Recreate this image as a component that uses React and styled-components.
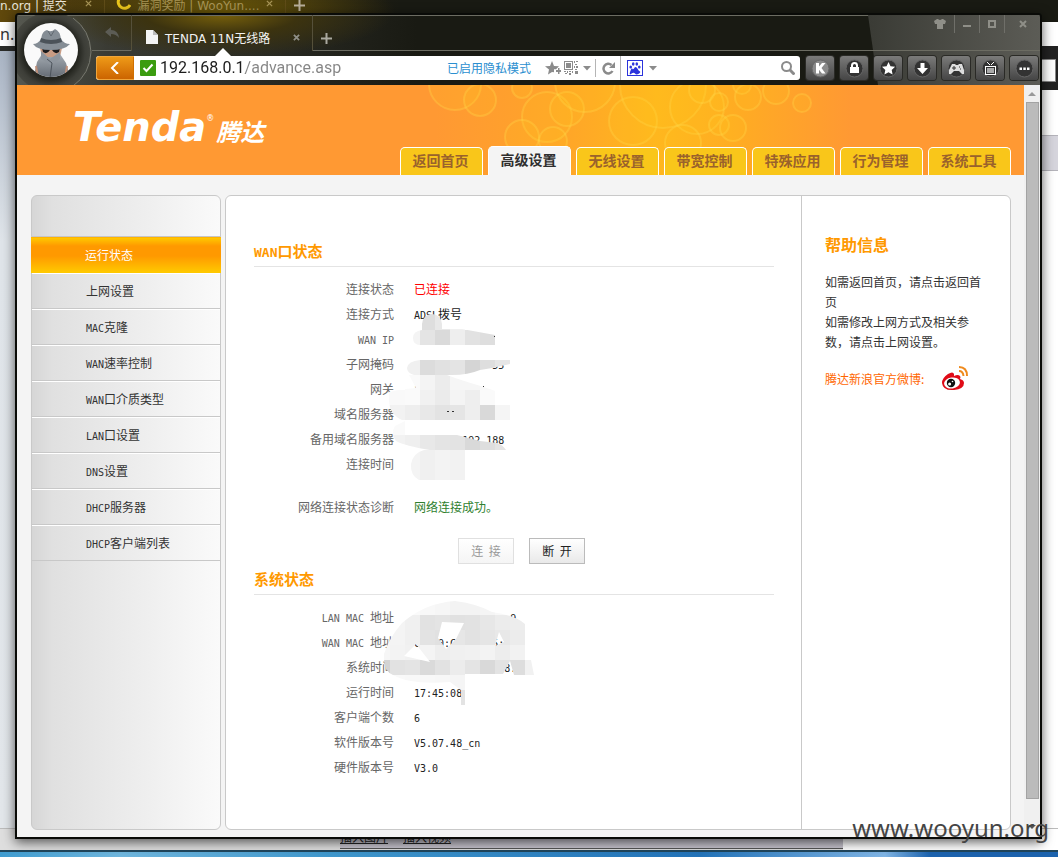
import React from "react";
import styled, { createGlobalStyle, css } from "styled-components";

const song = '"Noto Sans CJK SC", "Noto Sans", sans-serif';
const ui = '"DejaVu Sans", "Noto Sans CJK SC", sans-serif';

const GlobalStyle = createGlobalStyle`
  *, *::before, *::after { box-sizing: border-box; }
  body { margin: 0; font-family: ${song}; font-size: 12px; color: #333; }
  a { color: inherit; text-decoration: none; }
  button, input { font: inherit; padding: 0; margin: 0; border: 0; }
  h2, ul, p { margin: 0; padding: 0; }
  ul { list-style: none; }
  svg { display: block; }
`;

/* ---------- desktop and the window behind ---------- */

const Desktop = styled.div`
  position: relative;
  min-height: 100vh;
  display: flex;
  flex-direction: column;
  overflow: hidden;
  background: #fff;
`;

const BackTabs = styled.div`
  height: 22px;
  display: flex;
  align-items: flex-start;
  background: radial-gradient(ellipse 170px 60px at 225px 14px, #6b5708, transparent),
    linear-gradient(90deg, #60480c 0, #3c300e 110px, #191a13 400px);
  color: #b9b09c;
  font: 12px/12px ${ui};
  white-space: nowrap;
`;

const BackTab = styled.div`
  width: ${(p) => p.$width}px;
  height: 14px;
  display: flex;
  justify-content: space-between;
  gap: 4px;
  padding-right: 12px;
  border-right: 1px solid #5f4c18;
  color: ${(p) => (p.$bright ? "#e9e4d8" : "#a79456")};
`;

const TabCross = styled.span`
  color: #a79456;
`;

const BackPlus = styled.div`
  padding-left: 8px;
`;

const BackAddress = styled.div`
  height: 24px;
  background: #fff;
  font: 16px/24px "Noto Sans", sans-serif;
`;

const BackBody = styled.div`
  flex: 1;
  display: flex;
  justify-content: space-between;
`;

const BackLeft = styled.div`
  width: 50%;
  border-top: 5px solid #2b2c2a;
  background: linear-gradient(180deg, #a9b4c4 0, #dfe4e9 190px, #e2e6ea);
`;

const BackRight = styled.div`
  width: 50%;
  display: flex;
  flex-direction: column;
  background: #fff;
`;

const BackSearch = styled.div`
  height: 44px;
  padding: 13px 2px 8px;
  background: #222;
  &::after {
    content: "";
    display: block;
    height: 23px;
    background: #fff;
    border: 1px solid #888;
  }
`;

const BackBand = styled.div`
  height: 36px;
  margin-top: 45px;
  background: #d5d4dc;
  border: solid #b4b3ba;
  border-width: 1px 0;
`;

const BackFooter = styled.div`
  height: 22px;
  display: flex;
  background: #dedede;
  border-top: 1px solid #bbb;
`;

const BackLinks = styled.div`
  flex: 0 0 503px;
  margin-left: 340px;
  height: 20px;
  display: flex;
  gap: 15px;
  background: #c6c3cd;
  border-bottom: 1px solid #555;
  font: 12px/15px ${song};
  color: #222;
  text-decoration: underline;
`;

const BackBlank = styled.div`
  flex: 1;
  background: #fff;
`;

const Taskbar = styled.div`
  height: 7px;
  border-top: 2px solid #20465c;
  background: linear-gradient(90deg, #3f9cd0 0, #6fb6dd 120px, #3f97cc 330px, #2373b8 700px, #7fb4e4 885px, #1c63ae 930px);
`;

const Watermark = styled.div`
  position: absolute;
  right: 9px;
  bottom: 13px;
  font: 24px/32px "Noto Sans", sans-serif;
  color: #454545;
`;

/* ---------- browser window ---------- */

const Frame = styled.section`
  position: absolute;
  inset: 13px 16px 18px 15px;
  display: flex;
  flex-direction: column;
  border: 2px solid #0a0b08;
  border-radius: 4px 4px 0 0;
  background: #191a13;
  box-shadow: 0 3px 12px rgba(0, 0, 0, 0.65);
  overflow: hidden;
`;

const Chrome = styled.header`
  position: relative;
  height: 70px;
  display: flex;
  background: radial-gradient(ellipse 170px 42px at 205px 0, #77600b 0, #3c330f 45%, transparent),
    linear-gradient(90deg, #55574f 0, #3a3b34 90px, #191a13 400px);
  box-shadow: inset 0 1px #6c6c62;
  font-family: ${ui};
  &::after {
    content: "";
    position: absolute;
    inset: 0 0 0 auto;
    width: 172px;
    background: linear-gradient(90deg, #3a3b35, #5c5c56);
    clip-path: polygon(0 0, 100% 0, 100% 100%, 10px 100%);
  }
`;

const AvatarSlot = styled.div`
  flex: 0 0 75px;
  overflow: hidden;
`;

const ChromeMain = styled.div`
  flex: 1;
  min-width: 0;
  position: relative;
  z-index: 1;
`;

const TabStrip = styled.div`
  height: 36px;
  display: flex;
`;

const IconButton = styled.button`
  flex: none;
  width: ${(p) => p.$width || 24}px;
  height: ${(p) => (p.$height ? p.$height + "px" : "100%")};
  display: flex;
  align-items: center;
  justify-content: center;
  background: none;
  color: ${(p) => p.$color || "#8f8f88"};
  ${(p) => p.$divided && css`border-left: 1px solid #6f6f69;`}
  ${(p) => p.$lined && css`border-bottom: 1px solid #6c6c62;`}
`;

const ActiveTab = styled.div`
  position: relative;
  flex: 0 0 182px;
  display: flex;
  align-items: center;
  padding: 8px 8px 0 14px;
  gap: 7px;
  border: solid #55503a;
  border-width: 0 1px;
  color: #f2f2f2;
  font-size: 12px;
  white-space: nowrap;
  &::after {
    content: "";
    position: absolute;
    left: 83px;
    bottom: -5px;
    border: 8px solid transparent;
    border-top: 0;
    border-bottom-color: #fff;
  }
`;

const TabTitle = styled.span`
  flex: 1;
`;

const StripRest = styled.div`
  flex: 1;
  display: flex;
  justify-content: space-between;
  border-bottom: 1px solid #6c6c62;
`;

const WindowButtons = styled.div`
  display: flex;
  height: 18px;
`;

const Toolbar = styled.div`
  display: flex;
  height: 34px;
  padding: 5px 2px 5px 4px;
  gap: 6px;
`;

const AddressBar = styled.form`
  flex: 1;
  min-width: 0;
  display: flex;
  align-items: center;
  height: 24px;
  background: #fff;
  border-radius: 3px;
  overflow: hidden;
`;

const BackButton = styled.button`
  flex: 0 0 38px;
  height: 24px;
  display: flex;
  align-items: center;
  justify-content: center;
  background: linear-gradient(#ee9a18, #cc6400);
  border: 1px solid #f0a53a;
  border-right-color: #d07000;
  border-radius: 3px 0 0 3px;
`;

const Secure = styled.span`
  flex: none;
  margin: 0 4px 0 6px;
`;

const UrlInput = styled.input`
  flex: 1;
  min-width: 0;
  height: 24px;
  outline: 0;
  font: 16px/24px Roboto, sans-serif;
  color: transparent;
  background: linear-gradient(90deg, #1c1c1c 85px, #858585 85px);
  -webkit-background-clip: text;
  background-clip: text;
`;

const PrivateMode = styled.span`
  flex: none;
  margin-right: 12px;
  color: #2b8fd0;
  font: 12px/24px ${song};
`;

const Divider = styled.span`
  width: 1px;
  height: ${(p) => p.$height}px;
  background: #b5b5b5;
`;

const SearchInput = styled.input`
  flex: 0 0 119px;
  min-width: 0;
  height: 24px;
  outline: 0;
  background: none;
`;

const ToolButtons = styled.div`
  display: flex;
  gap: 6px;
`;

const ToolButton = styled.button`
  width: 28px;
  height: 24px;
  display: flex;
  align-items: center;
  justify-content: center;
  border-radius: 3px;
  background: linear-gradient(#7b7b7a, #454545);
  box-shadow: 0 0 0 1px #2a2a26;
`;

/* ---------- router page ---------- */

const View = styled.div`
  flex: 1;
  min-height: 0;
  display: flex;
  background: #f4f4f4;
`;

const Page = styled.div`
  flex: 1;
  min-width: 0;
  display: flex;
  flex-direction: column;
`;

const Banner = styled.div`
  position: relative;
  height: 90px;
  flex: none;
  display: flex;
  justify-content: space-between;
  background: #f93;
`;

const Bubbles = styled.svg`
  position: absolute;
  right: 174px;
  top: 0;
`;

const Logo = styled.div`
  position: relative;
  display: flex;
  align-items: baseline;
  height: 60px;
  padding: 18px 0 0 56px;
  color: #fff;
  font: italic bold 40px/48px "DejaVu Sans", sans-serif;
`;

const Reg = styled.sup`
  font: 8px/8px "DejaVu Sans", sans-serif;
  align-self: flex-start;
  padding: 12px 2px 0 0;
`;

const LogoCn = styled.span`
  font: italic bold 24px/40px ${song};
`;

const TopTabs = styled.nav`
  position: relative;
  display: flex;
  align-items: flex-end;
  gap: 5px;
  padding-right: 13px;
`;

const TopTab = styled.a`
  width: 83px;
  height: ${(p) => (p.$active ? 29 : 28)}px;
  padding-right: 2px;
  border: 1px solid #fff;
  border-bottom: 0;
  border-radius: 5px 5px 0 0;
  background: ${(p) => (p.$active ? "#f4f4f4" : "#f9c61a")};
  color: ${(p) => (p.$active ? "#2f2f2f" : "#9a622c")};
  font: bold 14px/24px ${song};
  text-align: center;
`;

const Columns = styled.div`
  flex: 1;
  display: flex;
  gap: 4px;
  padding: 20px 13px 7px 14px;
`;

const Sidebar = styled.nav`
  flex: 0 0 190px;
  border: 1px solid #c9c9c9;
  border-radius: 6px;
  background: linear-gradient(90deg, #d6d6d6, #e0e0e0 20px, #fafafa);
`;

const SideList = styled.ul`
  margin-top: 40px;
  border-top: 1px solid #c6c6c6;
`;

const SideLink = styled.a`
  display: block;
  height: 36px;
  padding-left: 54px;
  border-top: 1px solid #fff;
  border-bottom: 1px solid #c8c8c8;
  line-height: 34px;
  ${(p) =>
    p.$active &&
    css`
      margin: 0 -1px;
      border-color: #ffb400 transparent #ffc800;
      background: linear-gradient(#ffc800, #f90 8px, #f90 18px, #ffc800);
      color: #fff;
    `}
`;

const Latin = styled.span`
  font-family: "DejaVu Sans Mono", monospace;
  font-size: ${(p) => (p.$big ? 13 : 10)}px;
  line-height: 0;
  white-space: pre;
`;

const Panel = styled.main`
  flex: 1;
  min-width: 0;
  display: flex;
  border: 1px solid #c9c9c9;
  border-radius: 6px;
  background: #fff;
`;

const Content = styled.div`
  flex: 1;
  padding: 45px 27px 20px 28px;
`;

const SectionTitle = styled.h2`
  padding-bottom: 5px;
  border-bottom: 1px solid #e4e4e4;
  color: #f90;
  font: bold 15px/20px ${song};
`;

const Block = styled.div`
  position: relative;
  padding-top: ${(p) => p.$top || 11}px;
`;

const Data = styled.table`
  border-collapse: collapse;
  tr { height: 25px; }
  th, td { height: 25px; padding: 0 0 3px; line-height: 22px; white-space: pre; vertical-align: middle; }
  th { width: 140px; color: #666; font-weight: normal; text-align: right; }
  td { padding-left: 20px; }
`;

const Tone = styled.span`
  color: ${(p) => p.$color};
`;

const Mosaic = styled.svg`
  position: absolute;
  left: 0;
  top: 0;
`;

const Actions = styled.div`
  display: flex;
  gap: 15px;
  padding: 17px 0 5px 204px;
`;

const ActionButton = styled.button`
  width: 56px;
  height: 26px;
  border: 1px solid #bbb;
  background: linear-gradient(#fff, #e9e9e9);
  color: #222;
  line-height: 24px;
  white-space: pre;
  &:disabled {
    border-color: #e0e0e0;
    background: linear-gradient(#fff, #f5f5f5);
    color: #999;
  }
`;

const Help = styled.aside`
  flex: 0 0 209px;
  padding: 38px 25px 0 23px;
  border-left: 1px solid #c9c9c9;
  line-height: 20px;
`;

const HelpTitle = styled.h2`
  margin-bottom: 18px;
  color: #f90;
  font: bold 16px/20px ${song};
`;

const Weibo = styled.a`
  display: flex;
  gap: 17px;
  align-items: center;
  margin-top: 14px;
  color: #f60;
  white-space: nowrap;
`;

const ScrollTrack = styled.div`
  flex: 0 0 16px;
  display: flex;
  flex-direction: column;
  align-items: center;
  background: #f0f0f0;
  padding: 7px 0 8px;
`;

const ScrollArrow = styled.span`
  border: 4px solid transparent;
  ${(p) => (p.$down ? css`border-top-color: #555; border-bottom: 0;` : css`border-bottom-color: #999; border-top: 0;`)}
`;

const ScrollThumb = styled.div`
  flex: 1;
  width: 13px;
  margin: 6px 0 26px;
  background: #bbb;
  border: 1px solid #a3a3a3;
`;

/* ---------- drawings ---------- */

function Avatar() {
  return (
    <svg width="75" height="70" viewBox="17 15 75 70">
      <defs>
        <linearGradient id="coat" x1="0" x2="0" y1="0" y2="1">
          <stop offset="0" stopColor="#a4abb2" />
          <stop offset="1" stopColor="#5b626b" />
        </linearGradient>
        <radialGradient id="ring">
          <stop offset="0.68" stopColor="#24251f" />
          <stop offset="0.85" stopColor="#3d3e38" />
          <stop offset="1" stopColor="#45463f" />
        </radialGradient>
        <clipPath id="face"><circle cx="51" cy="50" r="27" /></clipPath>
      </defs>
      <circle cx="51" cy="52" r="40" fill="url(#ring)" />
      <path d="M73 18q17 12 18 34-1 22-18 34" fill="none" stroke="#77786f" strokeWidth="1" />
      <circle cx="51" cy="50" r="27" fill="#fafafa" />
      <g clipPath="url(#face)">
        <path d="M40 48l2 9 9 5 9-5 2-9z" fill="#c99c84" />
        <path d="M37 62l5-8 5 3h8l5-3 6 9 5 18H33z" fill="url(#coat)" />
        <path d="M36 66l2 12M67 66l-2 12" stroke="#c08f78" strokeWidth="2" />
        <path d="M41 51l9 8 10-7v7l-9 6-10-6z" fill="#8e959d" />
        <path d="M47 59l5 4-2 15" fill="none" stroke="#4d545c" />
        <path d="M42 48h8l1 1 1-1h8l-1 4q-4 3-7-2h-2q-3 5-7 2z" fill="#1b1b1d" />
        <path d="M33 44q5 0 8-5 1-8 6-9 4 3 8-1 5 2 6 10 3 5 9 5-5 6-19 6t-18-6z" fill="#858d95" />
        <path d="M40 42q11 4 22 0l-1-4q-10 4-20 0z" fill="#4b5259" />
        <path d="M48 31l3 5 3-5" fill="none" stroke="#626a72" />
      </g>
    </svg>
  );
}

const Close = ({ size = 8, w = 2 }) => (
  <svg width={size} height={size} viewBox="0 0 8 8" stroke="currentColor" strokeWidth={w}>
    <path d="M1 1l6 6M7 1L1 7" />
  </svg>
);

const Plus = () => (
  <svg width="11" height="11" viewBox="0 0 11 11" stroke="currentColor" strokeWidth="2">
    <path d="M0 5.500h11M5.500 0v11" />
  </svg>
);

const Caret = () => (
  <svg width="8" height="5" viewBox="0 0 8 5"><path d="M0 0h8L4 4.500z" fill="#8b8b8b" /></svg>
);

const toolGlyphs = {
  account: <path d="M7 6h3v3.500L13 6h3.500l-4 5 4 5.500H13L10 12.800v3.700H7z" />,
  lock: (
    <>
      <rect x="7" y="10" width="9" height="6" />
      <path d="M9 10V8.500a2.500 2.500 0 0 1 5 0V10" fill="none" stroke="#fff" strokeWidth="2" />
    </>
  ),
  star: <path d="M11.500 5l2 4.300 4.600.5-3.400 3.100.9 4.600-4.100-2.300-4.100 2.300.9-4.600L5 9.800l4.600-.5z" />,
  download: <path d="M9.500 6h4v5H17l-5.500 6L6 11h3.500z" />,
  games: (
    <>
      <path d="M7 7h3l1 1h2l1-1h3l2 6v4h-2l-3-3h-5l-3 3H4v-4z" fill="#ddd" />
      <path d="M7 11h4M9 9v4M14 10h1M15 12h1" stroke="#333" />
    </>
  ),
  tv: (
    <>
      <rect x="6.500" y="9.500" width="10" height="8" fill="none" stroke="#fff" />
      <rect x="8" y="11" width="7" height="5" fill="#aaa" />
      <path d="M8 5l3 3M15 5l-3 3" stroke="#fff" />
    </>
  ),
  more: <path d="M6.500 10.500h2.500v2.500H6.500zM10.300 10.500h2.500v2.500h-2.500zM14 10.500h2.500v2.500H14z" />,
};

const ToolGlyph = ({ name }) => (
  <svg width="23" height="23" viewBox="0 0 23 23" fill="#fff">
    <circle cx="11.500" cy="11.500" r="8.500" fill={name === "account" ? "#8b8b8b" : "#333"} stroke="#666" />
    {toolGlyphs[name]}
  </svg>
);

const bubbleData = [
  [455, 84, 26], [480, 100, 16], [547, 117, 25], [567, 109, 17], [585, 82, 30], [522, 88, 10],
  [633, 121, 24], [663, 85, 43], [697, 107, 27], [683, 143, 18], [522, 137, 17], [553, 141, 14],
  [702, 90, 13], [719, 102, 9], [719, 125, 10], [742, 85, 9], [748, 97, 13], [776, 91, 13],
  [802, 103, 9], [733, 128, 13],
];

function BannerArt() {
  return (
    <Bubbles width="460" height="90" viewBox="390 85 460 90" aria-hidden="true">
      <defs>
        <linearGradient id="glow">
          <stop offset="0.1" stopColor="#f93" />
          <stop offset="0.36" stopColor="#ffa429" />
          <stop offset="0.58" stopColor="#ffb71e" />
          <stop offset="0.74" stopColor="#ffad22" />
          <stop offset="1" stopColor="#f93" />
        </linearGradient>
      </defs>
      <rect x="390" y="85" width="460" height="90" fill="url(#glow)" />
      {bubbleData.map(([x, y, r], i) => (
        <circle key={i} cx={x} cy={y} r={r} fill="#ffcf1e" fillOpacity="0.14" stroke="#ffd94a" strokeOpacity="0.32" strokeWidth="2" />
      ))}
    </Bubbles>
  );
}

function WeiboLogo() {
  return (
    <svg width="28" height="26" viewBox="0 0 28 26">
      <path d="M1 17q0-5 6-9 5-3 6 0v2q4-2 6 0 1 1 0 3 4 1 4 4 0 6-10 7-11 1-12-7z" fill="#e00b17" />
      <ellipse cx="11" cy="17" rx="8" ry="5.500" fill="#fff" transform="rotate(-8 11 17)" />
      <circle cx="10" cy="17" r="4.200" fill="#111" />
      <circle cx="8.600" cy="18" r="1.500" fill="#fff" />
      <circle cx="11.500" cy="15.500" r="0.800" fill="#fff" />
      <path d="M18 1q8 0 8 9M18 5q4 0 4.500 5" fill="none" stroke="#ef8a1d" strokeWidth="2" />
    </svg>
  );
}

/* Each band is a row of 15px tiles: [x, y, height, shades]. */
function Tiles({ bands }) {
  return bands.flatMap(([x, y, h, shades], b) =>
    shades.map((s, i) => <rect key={b + "-" + i} x={x + i * 15} y={y} width="15" height={h} fill={"#" + s + s + s} />)
  );
}

const wanBands = [
  [405, 300, 30, ["e8", "de", "e8", "f0"]],
  [405, 330, 15, ["f4", "e4", "da", "ee", "e2", "de"]],
  [405, 360, 15, ["f0", "dc", "e1", "e4", "d5", "de", "e6"]],
  [405, 375, 15, ["fa", "f4", "ec", "f6", "f6", "f8"]],
  [375, 390, 15, ["f9", "f9", "fa", "f1", "eb", "f4", "ee", "fa"]],
  [375, 405, 15, ["f4", "f2", "ee", "e8", "e3", "e5", "ee", "d9", "f5"]],
  [375, 420, 15, ["fb", "fa"]],
  [390, 435, 15, ["f2", "ef", "e8", "e4", "e3", "d9", "de", "e4"]],
  [405, 450, 30, ["f4", "f0", "f3", "f2"]],
];

const WanMosaic = () => (
  <Mosaic width="320" height="216" viewBox="254 267 320 216" aria-hidden="true">
    <clipPath id="wanClip">
      <path d="M422 330V324a10 10 0 0 1 20 0V329H462L495 335V345H420Q413 345 413 338 413 331 422 330z" />
      <path d="M420 360H510V364Q494 368 480 370 468 375 452 375H414Q407 373 407 368 408 361 420 360z" />
      <path d="M409 375H447Q460 380 484 387L495 391V404H510V420H402Q389 414 389 400V392Q400 389 416 388z" />
      <path d="M405 421V435H457L480 441 497 443Q503 445 506 450H430Q405 446 396 441 390 434 395 426z" />
      <path d="M424 450H465V480H419Q410 475 411 464 413 453 424 450z" />
    </clipPath>
    <g clipPath="url(#wanClip)"><Tiles bands={wanBands} /></g>
    <path d="M447 411h2v1h-2zM452 411h2v1h-2zM494 336h1v1h-1zM483 386h1v1h-1z" fill="#333" />
  </Mosaic>
);

const sysBands = [
  [375, 600, 15, ["fa", "fa", "fa", "f8", "f6", "f3", "f3", "f5", "f8", "fa"]],
  [375, 615, 15, ["f6", "f4", "f0", "e2", "e4", "e1", "e2", "e7", "ec", "ed"]],
  [375, 630, 15, ["f6", "f4", "f0", "e3", "e1", "e6", "e2", "e5", "e8", "ec"]],
  [375, 645, 15, ["f6", "f3", "f1", "f4", "ee", "f0", "f1", "f3", "ed", "f2"]],
  [375, 660, 15, ["d3", "e2", "e4", "da", "e2", "ec", "e4", "d9", "e3", "dd", "f1"]],
  [375, 675, 15, ["fa", "f9", "f8", "f8", "f7", "f5", "f5"]],
  [450, 690, 15, ["e3"]],
];

const SysMosaic = () => (
  <Mosaic width="320" height="120" viewBox="254 595 320 120" aria-hidden="true">
    <clipPath id="sysClip">
      <path
        clipRule="evenodd"
        d="M384 654Q389 638 402 623 425 603 455 601 478 604 492 612 515 615 525 624V660H531L534 675H514L510 661 503 674H465V705H461V690L450 682Q410 685 393 675 384 671 384 660zM442 622L464 623 456 639 446 649 438 638zM416 644L430 662 404 656zM499 632L504 642 495 646z"
      />
    </clipPath>
    <g clipPath="url(#sysClip)"><Tiles bands={sysBands} /></g>
  </Mosaic>
);

/* ---------- text helpers and data ---------- */

function Mixed({ text, big }) {
  return text
    .split(/([\x20-\x7e]+)/)
    .filter(Boolean)
    .map((part, i) => (/^[\x20-\x7e]/.test(part) ? <Latin key={i} $big={big}>{part}</Latin> : part));
}

const topTabs = ["返回首页", "高级设置", "无线设置", "带宽控制", "特殊应用", "行为管理", "系统工具"];
const sideItems = ["运行状态", "上网设置", "MAC克隆", "WAN速率控制", "WAN口介质类型", "LAN口设置", "DNS设置", "DHCP服务器", "DHCP客户端列表"];

const wanRows = [
  ["连接状态", "已连接", "#f00"],
  ["连接方式", "ADSL拨号"],
  ["WAN IP", ""],
  ["子网掩码", "             55"],
  ["网关", "10."],
  ["域名服务器", ""],
  ["备用域名服务器", "        192.188"],
  ["连接时间", ""],
];

const sysRows = [
  ["LAN MAC 地址", "                9"],
  ["WAN MAC 地址", "C  70:C      5:"],
  ["系统时间", "              28."],
  ["运行时间", "17:45:08"],
  ["客户端个数", "6"],
  ["软件版本号", "V5.07.48_cn"],
  ["硬件版本号", "V3.0"],
];

const StatusTable = ({ rows }) => (
  <Data>
    <tbody>
      {rows.map(([label, value, color]) => (
        <tr key={label}>
          <th scope="row"><Mixed text={label} /></th>
          <td><Tone $color={color || "#222"}><Mixed text={value} /></Tone></td>
        </tr>
      ))}
    </tbody>
  </Data>
);

function BrowserChrome() {
  return (
    <Chrome>
      <AvatarSlot><Avatar /></AvatarSlot>
      <ChromeMain>
        <TabStrip>
          <IconButton $width={39} $lined $color="#5c5c55" aria-label="撤销">
            <svg width="14" height="12" viewBox="0 0 14 12"><path d="M6 0v3q7 0 8 8-3-4-8-4v3L0 5z" fill="currentColor" /></svg>
          </IconButton>
          <ActiveTab>
            <svg width="12" height="14" viewBox="0 0 12 14"><path d="M0 0h7l5 5v9H0z" fill="#f4f4f4" /><path d="M7 0v5h5" fill="#bbb" /></svg>
            <TabTitle>TENDA 11N无线路</TabTitle>
            <IconButton $width={16} $height={16} aria-label="关闭标签"><Close size={7} /></IconButton>
          </ActiveTab>
          <StripRest>
            <IconButton $width={26} $height={46} $color="#aaa9a0" aria-label="新标签"><Plus /></IconButton>
            <WindowButtons>
              <IconButton $width={28} aria-label="皮肤">
                <svg width="12" height="10" viewBox="0 0 12 10"><path d="M3 0h1q2 2 4 0h1l3 2-1 3H9v5H3V5H1L0 2z" fill="currentColor" /></svg>
              </IconButton>
              <IconButton $width={25} $divided aria-label="最小化">
                <svg width="8" height="8"><path d="M0 5h8v2H0z" fill="currentColor" /></svg>
              </IconButton>
              <IconButton $width={25} $divided aria-label="最大化">
                <svg width="8" height="8"><rect x="1" y="1" width="6" height="6" fill="none" stroke="currentColor" strokeWidth="2" /></svg>
              </IconButton>
              <IconButton $width={36} $divided aria-label="关闭"><Close /></IconButton>
            </WindowButtons>
          </StripRest>
        </TabStrip>
        <Toolbar>
          <AddressBar onSubmit={(e) => e.preventDefault()}>
            <BackButton type="button" aria-label="后退">
              <svg width="10" height="12" viewBox="0 0 10 12"><path d="M8 0L2 6l6 6" fill="none" stroke="#fff" strokeWidth="2" /></svg>
            </BackButton>
            <Secure>
              <svg width="16" height="16" viewBox="0 0 16 16"><rect width="16" height="16" rx="1" fill="#3b9c10" /><path d="M3.500 8l3 3 6-6.500" fill="none" stroke="#fff" strokeWidth="2" /></svg>
            </Secure>
            <UrlInput aria-label="地址" defaultValue="192.168.0.1/advance.asp" />
            <PrivateMode>已启用隐私模式</PrivateMode>
            <IconButton type="button" $width={20} aria-label="收藏">
              <svg width="16" height="15" viewBox="0 0 16 15"><path d="M7 0l2 5 5 .3-3 3H9v3L7 11l-4 2.500 1-5L0 5.300 5 5zM11 9h2V7h1.500v2H16v2h-1.500v2H13v-2h-2z" fill="#8b8b8b" /></svg>
            </IconButton>
            <IconButton type="button" $width={16} aria-label="二维码">
              <svg width="14" height="14" viewBox="0 0 14 14" fill="#8b8b8b">
                <path d="M0 0h9v9H0zM1 1v7h7V1z" fillRule="evenodd" />
                <path d="M2 2h5v5H2zM10 0h1v2h-1zM12 0h2v1h-2zM11 3h2v1h-2zM10 5h1v2h-1zM12 5h2v2h-2zM11 8h2v1h-2zM0 10h2v1H0zM3 10h1v2H3zM5 10h2v1H5zM8 10h1v2H8zM11 10h3v3h-3zM1 12h2v1H1zM5 12h2v2H5z" />
              </svg>
            </IconButton>
            <IconButton type="button" $width={16} aria-label="更多"><Caret /></IconButton>
            <Divider $height={18} />
            <IconButton type="button" $width={24} aria-label="刷新">
              <svg width="13" height="13" viewBox="0 0 13 13"><path d="M9.500 3A4.800 4.800 0 1 0 10.500 9" fill="none" stroke="#8b8b8b" strokeWidth="2.500" /><path d="M13 0v6H7z" fill="#8b8b8b" /></svg>
            </IconButton>
            <Divider $height={24} />
            <IconButton type="button" $width={28} aria-label="百度">
              <svg width="16" height="16" viewBox="0 0 16 16" fill="#2b33dc">
                <rect x=".5" y=".5" width="15" height="15" fill="none" stroke="#2b33dc" />
                <ellipse cx="3.700" cy="7" rx="1.300" ry="1.600" /><ellipse cx="6.200" cy="4" rx="1.300" ry="1.700" />
                <ellipse cx="9.800" cy="4" rx="1.300" ry="1.700" /><ellipse cx="12.300" cy="7" rx="1.300" ry="1.600" />
                <path d="M8 7q2 0 2.600 1.700t2.100 2.600-1 2.500-3.700-.2-3.700.2-1-2.500 2.100-2.600T8 7z" />
              </svg>
            </IconButton>
            <Caret />
            <SearchInput aria-label="搜索" />
            <IconButton aria-label="搜索" $width={24}>
              <svg width="14" height="14" viewBox="0 0 14 14" fill="none" stroke="#8b8b8b" strokeWidth="2"><circle cx="5.500" cy="5.500" r="4.500" /><path d="M9 9l4.500 4.500" strokeWidth="3" /></svg>
            </IconButton>
          </AddressBar>
          <ToolButtons>
            {Object.keys(toolGlyphs).map((name) => (
              <ToolButton key={name} aria-label={name}><ToolGlyph name={name} /></ToolButton>
            ))}
          </ToolButtons>
        </Toolbar>
      </ChromeMain>
    </Chrome>
  );
}

export default function App() {
  return (
    <Desktop>
      <GlobalStyle />
      <BackTabs>
        <BackTab $width={105} $bright><span>n.org | 提交</span><TabCross><Close size={7} w={1.5} /></TabCross></BackTab>
        <BackTab $width={181}>
          <svg width="26" height="10" viewBox="0 0 26 10"><path d="M14 -1a6 6 0 0 0 11 6" fill="none" stroke="#e9c51c" strokeWidth="3" /></svg>
          <span>漏洞奖励 | WooYun....</span><TabCross><Close size={7} w={1.5} /></TabCross>
        </BackTab>
        <BackPlus><Plus /></BackPlus>
      </BackTabs>
      <BackAddress>n.</BackAddress>
      <BackBody>
        <BackLeft />
        <BackRight><BackSearch /><BackBand /></BackRight>
      </BackBody>
      <BackFooter>
        <BackLinks><span>插入图片</span><span>插入视频</span></BackLinks>
        <BackBlank />
      </BackFooter>
      <Taskbar />

      <Frame>
        <BrowserChrome />
        <View>
          <Page>
            <Banner>
              <BannerArt />
              <Logo>Tenda<Reg>®</Reg><LogoCn>腾达</LogoCn></Logo>
              <TopTabs>
                {topTabs.map((t, i) => <TopTab key={t} href="#" $active={i === 1}>{t}</TopTab>)}
              </TopTabs>
            </Banner>
            <Columns>
              <Sidebar>
                <SideList>
                  {sideItems.map((t, i) => (
                    <li key={t}><SideLink href="#" $active={i === 0}><Mixed text={t} /></SideLink></li>
                  ))}
                </SideList>
              </Sidebar>
              <Panel>
                <Content>
                  <SectionTitle><Mixed text="WAN口状态" big /></SectionTitle>
                  <Block><StatusTable rows={wanRows} /><WanMosaic /></Block>
                  <Block $top={18}><StatusTable rows={[["网络连接状态诊断", "网络连接成功。", "#2f7f2f"]]} /></Block>
                  <Actions>
                    <ActionButton disabled>连  接</ActionButton>
                    <ActionButton>断  开</ActionButton>
                  </Actions>
                  <SectionTitle>系统状态</SectionTitle>
                  <Block><StatusTable rows={sysRows} /><SysMosaic /></Block>
                </Content>
                <Help>
                  <HelpTitle>帮助信息</HelpTitle>
                  <p>如需返回首页，请点击返回首页</p>
                  <p>如需修改上网方式及相关参数，请点击上网设置。</p>
                  <Weibo href="#">腾达新浪官方微博: <WeiboLogo /></Weibo>
                </Help>
              </Panel>
            </Columns>
          </Page>
          <ScrollTrack><ScrollArrow /><ScrollThumb /><ScrollArrow $down /></ScrollTrack>
        </View>
      </Frame>
      <Watermark>www.wooyun.org</Watermark>
    </Desktop>
  );
}
